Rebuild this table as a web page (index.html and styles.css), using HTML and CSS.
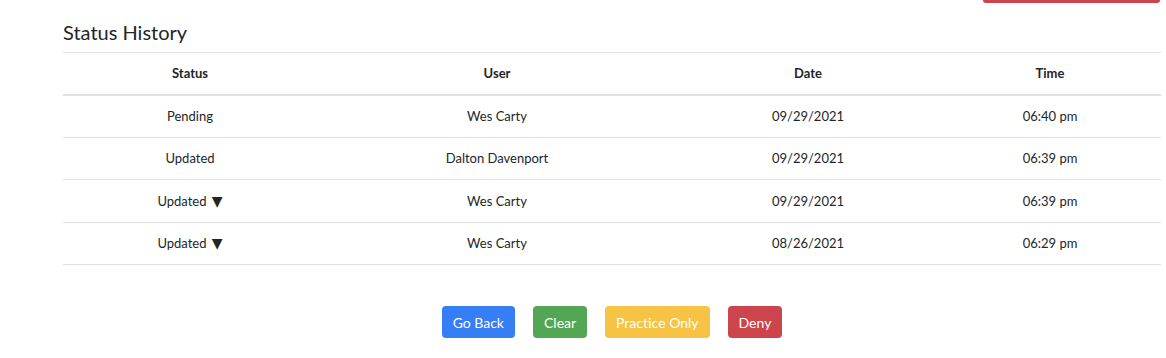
FILE: index.html
```html
<!DOCTYPE html>
<html lang="en">
<head>
    <meta charset="UTF-8">
    <meta name="viewport" content="width=device-width, initial-scale=1.0">
    <title>Status History</title>
    <link rel="stylesheet" href="styles.css">
</head>
<body>
    <div class="page">
        <!-- bottom edge of the action button above the fold -->
        <div class="top-actions">
            <span class="btn-edge"></span>
        </div>

        <h2 class="section-title">Status History</h2>

        <table class="history">
            <thead>
                <tr>
                    <th class="col-status">Status</th>
                    <th class="col-user">User</th>
                    <th class="col-date">Date</th>
                    <th class="col-time">Time</th>
                </tr>
            </thead>
            <tbody>
                <tr>
                    <td>Pending</td>
                    <td>Wes Carty</td>
                    <td>09/29/2021</td>
                    <td>06:40 pm</td>
                </tr>
                <tr>
                    <td>Updated</td>
                    <td>Dalton Davenport</td>
                    <td>09/29/2021</td>
                    <td>06:39 pm</td>
                </tr>
                <tr>
                    <td>Updated <span class="caret">&#9660;</span></td>
                    <td>Wes Carty</td>
                    <td>09/29/2021</td>
                    <td>06:39 pm</td>
                </tr>
                <tr>
                    <td>Updated <span class="caret">&#9660;</span></td>
                    <td>Wes Carty</td>
                    <td>08/26/2021</td>
                    <td>06:29 pm</td>
                </tr>
            </tbody>
        </table>

        <div class="actions">
            <button class="btn btn-primary" type="button">Go Back</button>
            <button class="btn btn-success" type="button">Clear</button>
            <button class="btn btn-warning" type="button">Practice Only</button>
            <button class="btn btn-danger" type="button">Deny</button>
        </div>
    </div>
</body>
</html>
```

FILE: styles.css
```css
*{
    margin: 0;
    box-sizing: border-box;
}
body
{
    margin: 0;
    background-color: #ffffff;
    color: #212529;
    font-family: Lato, "Open Sans", sans-serif;
}
.page
{
    width: 1098px;
    margin-left: 63px;
}
.top-actions
{
    display: flex;
    justify-content: flex-end;
    padding-right: 1px;
}
.btn-edge
{
    display: block;
    width: 177px;
    height: 3px;
    background-color: #cd454c;
    border-radius: 0 0 4px 4px;
}
.section-title
{
    margin-top: 16px;
    font-size: 20px;
    font-weight: 400;
    line-height: 26px;
    padding-bottom: 7px;
    color: #212529;
}
.history
{
    width: 100%;
    border-collapse: collapse;
    font-size: 13px;
}
.history th,
.history td
{
    text-align: center;
    height: 42.5px;
    padding: 0 12px;
    border-top: 1px solid #dee2e6;
}
.history th
{
    font-weight: 700;
    border-bottom: 2px solid #dee2e6;
    height: 42px;
}
.history tbody tr:last-child td
{
    border-bottom: 1px solid #dee2e6;
}
.col-status { width: 254px; }
.col-user { width: 360px; }
.col-date { width: 262px; }
.col-time { width: 222px; }
.caret
{
    font-family: "DejaVu Sans", sans-serif;
    font-size: 14px;
    margin-left: 2px;
}
.actions
{
    display: flex;
    justify-content: center;
    gap: 18px;
    margin-top: 41px;
}
.btn
{
    font-family: Lato, "Open Sans", sans-serif;
    font-size: 14px;
    color: #ffffff;
    border: none;
    border-radius: 4px;
    height: 32px;
    padding: 0 11px;
}
.btn-primary
{
    background-color: #367ef5;
}
.btn-success
{
    background-color: #53a653;
}
.btn-warning
{
    background-color: #f6c344;
}
.btn-danger
{
    background-color: #cd454c;
}
```
